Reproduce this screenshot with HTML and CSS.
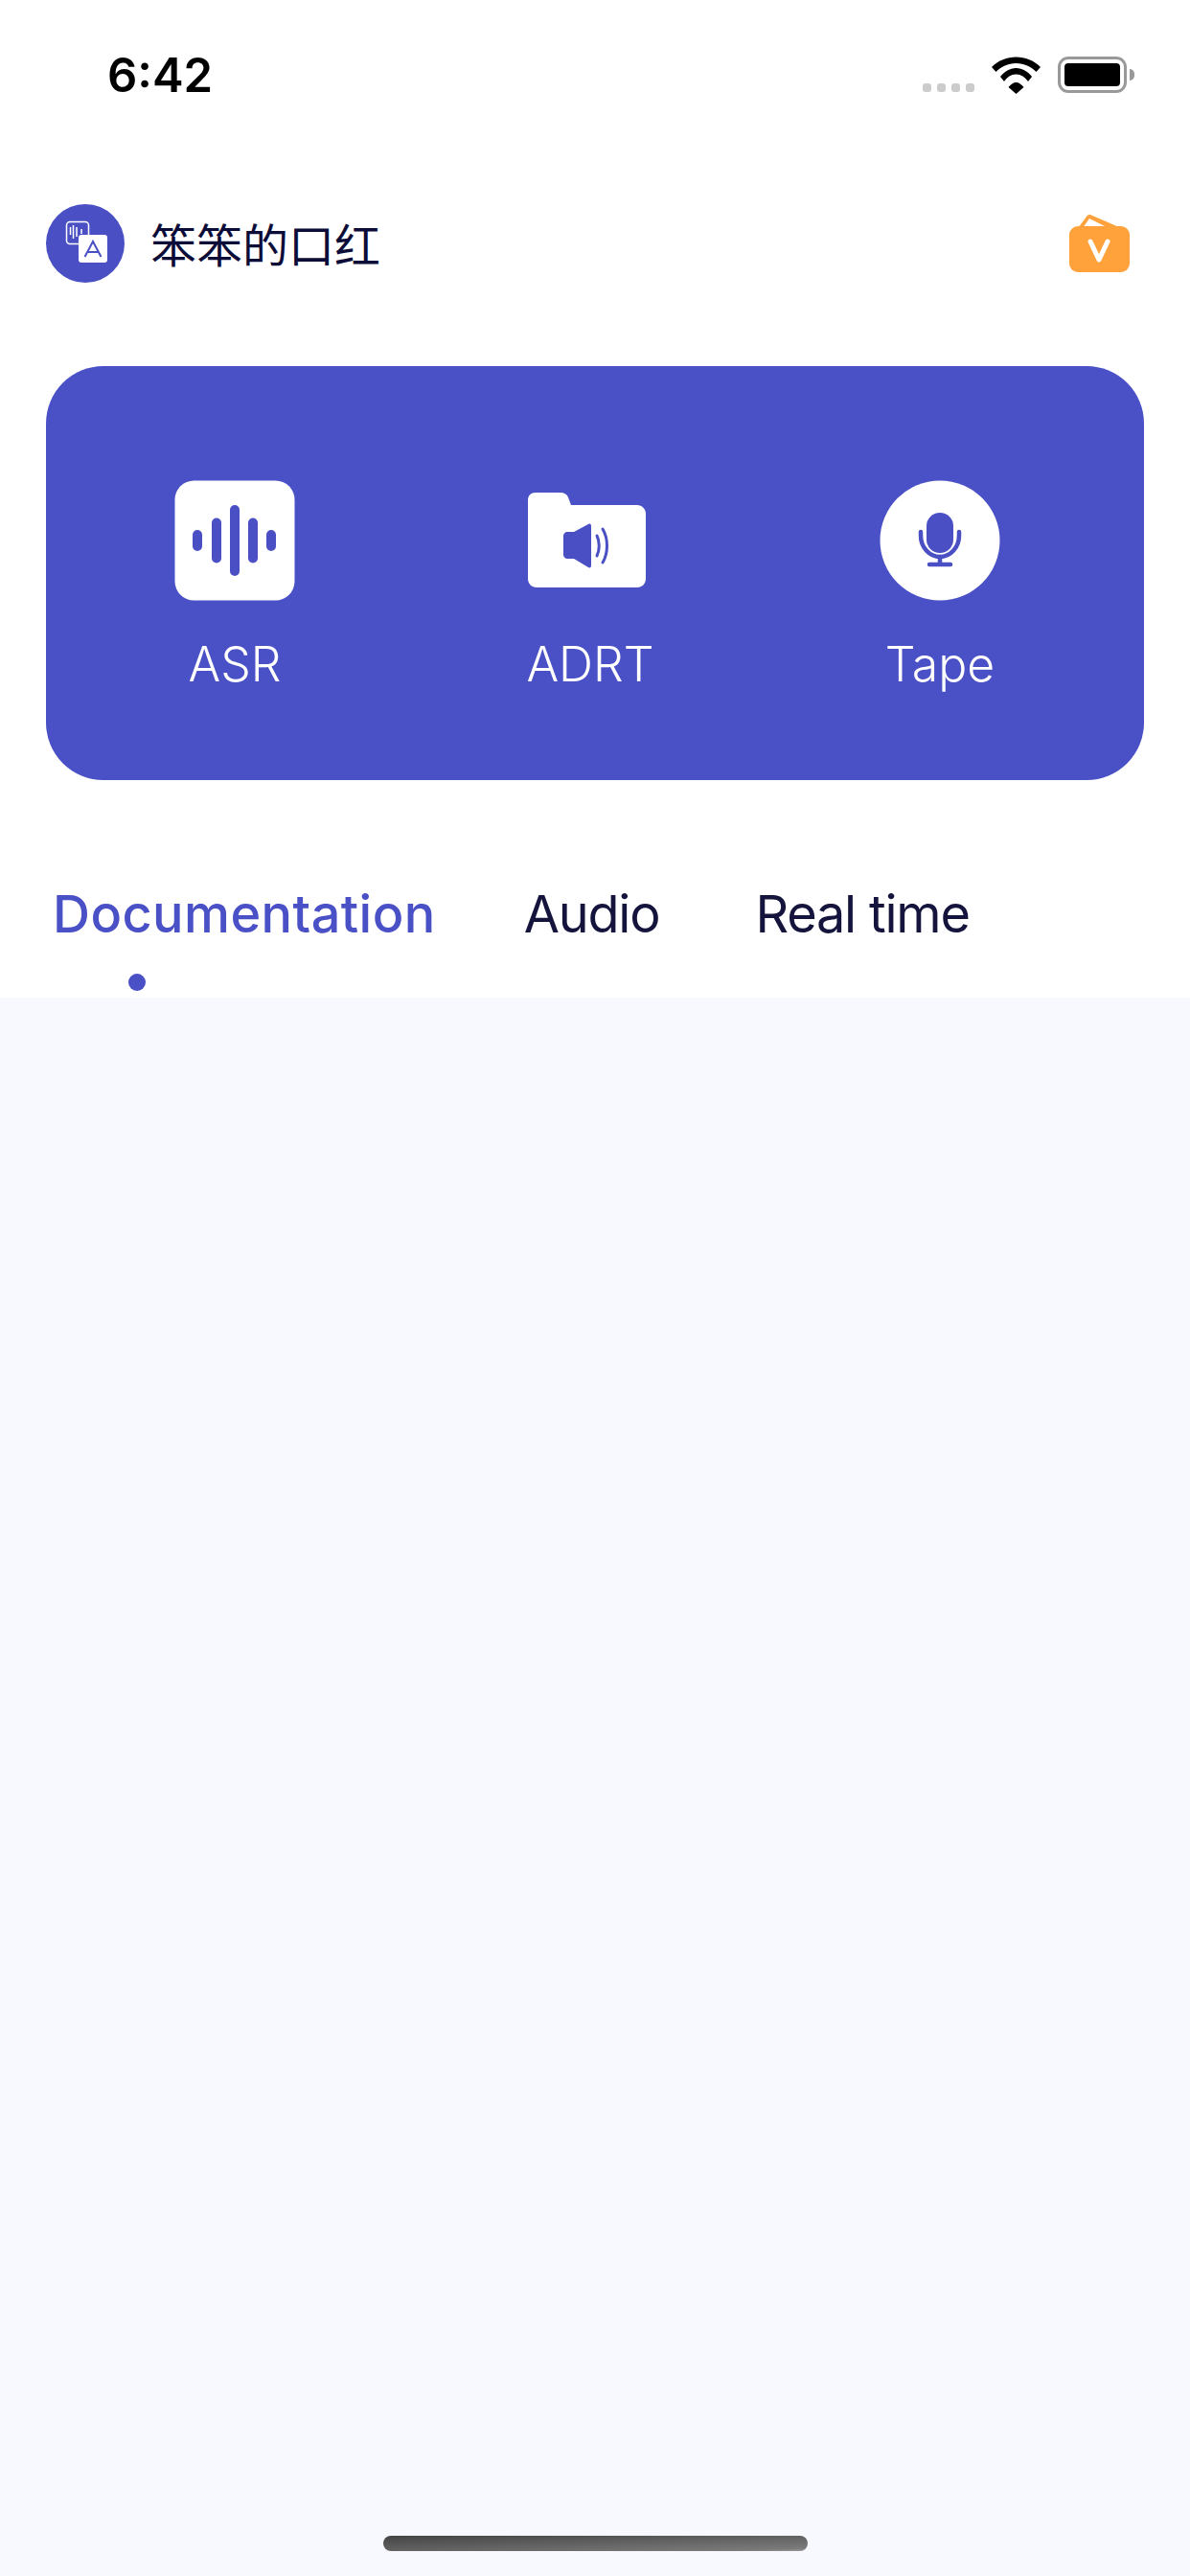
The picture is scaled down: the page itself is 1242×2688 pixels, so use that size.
FILE: index.html
```html
<!DOCTYPE html>
<html lang="en">
<head>
    <meta charset="UTF-8">
    <meta name="viewport" content="width=device-width, initial-scale=1.0">
    <title>Home</title>
    <link rel="stylesheet" href="styles.css">
</head>
<body>
    <div class="top-section">
        <!-- Status bar -->
        <div class="status-bar">
            <span class="time">6:42</span>
            <div class="status-icons">
                <div class="signal-dots">
                    <span class="signal-dot"></span>
                    <span class="signal-dot"></span>
                    <span class="signal-dot"></span>
                    <span class="signal-dot"></span>
                </div>
                <svg class="wifi-icon" width="51" height="40" viewBox="0 0 51 40">
                    <path d="M0 12C7 5 16 1.500 25.500 1.500S44 5 51 12l-4.500 5C41 11.500 34 8 25.500 8S10 11.500 4.500 17z" fill="#000"/>
                    <path d="M9 22C13.500 16.500 19 13 25.500 13S37.500 16.500 42 22l-4 5C35 22.500 30.500 19.500 25.500 19.500S16 22.500 13 27z" fill="#000"/>
                    <path d="M17.500 33C20 30 22.500 28 25.500 28S31 30 33.500 33L25.500 40z" fill="#000"/>
                </svg>
                <div class="battery">
                    <div class="battery-body"><div class="battery-fill"></div></div>
                    <div class="battery-cap"></div>
                </div>
            </div>
        </div>

        <!-- User row -->
        <div class="user-row">
            <div class="avatar">
                <svg width="82" height="82" viewBox="0 0 82 82">
                    <rect x="21.500" y="18.500" width="23" height="23" rx="3.500" fill="none" stroke="#fff" stroke-width="1.500"/>
                    <path d="M25.500 24v8M28.500 22v14M32 24v10M37 26v5" stroke="#fff" stroke-width="1.500"/>
                    <rect x="34" y="32" width="30" height="29" rx="3" fill="#fff"/>
                    <path d="M40.500 55L49 39l8.500 16M44 50h10" fill="none" stroke="#4a50c4" stroke-width="2"/>
                </svg>
            </div>
            <span class="user-name">笨笨的口红</span>
            <svg class="vip-icon" width="63" height="60" viewBox="0 0 63 60">
                <path d="M9 14L18 2c1-1.500 3-2.500 5-1.500L52 13z" fill="#ffa23c"/>
                <path d="M15 12.500L21 4l17 8.500z" fill="#fff"/>
                <rect x="0" y="12" width="63" height="48" rx="9" fill="#ffa23c"/>
                <path d="M22 28l9 19 9-19" fill="none" stroke="#fff" stroke-width="5" stroke-linecap="round" stroke-linejoin="round"/>
            </svg>
        </div>

        <!-- Feature card -->
        <div class="feature-card">
            <div class="feature">
                <svg width="126" height="126" viewBox="0 0 126 126">
                    <rect x="0.500" y="0.500" width="125" height="125" rx="20" fill="#fff"/>
                    <g stroke="#4a50c4" stroke-width="10" stroke-linecap="round">
                        <path d="M24 57v12M44 44.500v37M63 31v64M82 44.500v37M101 57v12"/>
                    </g>
                </svg>
                <span class="feature-label">ASR</span>
            </div>
            <div class="feature">
                <svg width="132" height="126" viewBox="0 0 132 126">
                    <path d="M1 21c0-5 3-8 8-8h25c5 0 8 2 9 5l3 8h69c5 0 9 4 9 9v68c0 5-4 9-9 9H10c-5 0-9-4-9-9z" fill="#fff"/>
                    <path d="M42 54h7l15-8c2-1 3 0 3 2v41c0 2-1 3-3 2l-15-9h-7c-2 0-4-2-4-4V58c0-2 2-4 4-4z" fill="#4a50c4"/>
                    <path d="M73 58c3 6 3 15 0 21M79 51c6 10 6 25 0 35" fill="none" stroke="#4a50c4" stroke-width="3" stroke-linecap="round"/>
                </svg>
                <span class="feature-label">ADRT</span>
            </div>
            <div class="feature">
                <svg width="126" height="126" viewBox="0 0 126 126">
                    <circle cx="63" cy="63" r="62.500" fill="#fff"/>
                    <rect x="49" y="34" width="28" height="42" rx="14" fill="#4a50c4"/>
                    <path d="M43 54v4c0 12 9 22 20 22s20-10 20-22v-4" fill="none" stroke="#4a50c4" stroke-width="4.500" stroke-linecap="round"/>
                    <path d="M63 80v8M52 88h22" fill="none" stroke="#4a50c4" stroke-width="4.500" stroke-linecap="round"/>
                </svg>
                <span class="feature-label">Tape</span>
            </div>
        </div>

        <!-- Tabs -->
        <div class="tabs">
            <div class="tab tab-active">
                <span>Documentation</span>
                <span class="tab-dot"></span>
            </div>
            <div class="tab"><span>Audio</span></div>
            <div class="tab tab-last"><span>Real time</span></div>
        </div>
    </div>

    <div class="content">
        <div class="home-bar"></div>
    </div>
</body>
</html>
```

FILE: styles.css
```css
html, body {
    height: 100%;
}
body {
    margin: 0;
    font-family: Inter, "Noto Sans CJK SC", sans-serif;
    background-color: #f8f9ff;
    color: #14143c;
    display: flex;
    flex-direction: column;
}
svg {
    display: block;
}
.top-section {
    background-color: #fff;
    height: 1041px;
    overflow: hidden;
}
.status-bar {
    height: 157px;
    padding: 0 58px 0 112px;
    display: flex;
    justify-content: space-between;
    align-items: flex-start;
}
.time {
    margin-top: 50px;
    font-size: 49px;
    line-height: 58px;
    font-weight: 600;
    color: #000;
}
.status-icons {
    margin-top: 58px;
    display: flex;
    align-items: flex-start;
}
.signal-dots {
    margin-top: 29px;
    margin-right: 18px;
    display: flex;
    gap: 6px;
}
.signal-dot {
    width: 9px;
    height: 9px;
    border-radius: 3px;
    background-color: #ccc;
}
.wifi-icon {
    margin-right: 18px;
}
.battery {
    margin-top: 1px;
    display: flex;
    align-items: center;
    gap: 3px;
}
.battery-body {
    box-sizing: border-box;
    width: 72px;
    height: 38px;
    padding: 4px;
    border: 3px solid #999;
    border-radius: 11px;
}
.battery-fill {
    height: 100%;
    border-radius: 4px;
    background-color: #000;
}
.battery-cap {
    width: 5px;
    height: 12px;
    border-radius: 0 5px 5px 0;
    background-color: #999;
}
.user-row {
    margin: 56px 0 0 48px;
    padding-right: 63px;
    height: 82px;
    display: flex;
    align-items: center;
}
.avatar {
    width: 82px;
    height: 82px;
    border-radius: 50%;
    background-color: #4a50c4;
}
.user-name {
    margin: -2px 0 0 27px;
    font-size: 48px;
    font-weight: 400;
    color: #0c0c38;
}
.vip-icon {
    margin-left: auto;
}
.feature-card {
    margin: 87px 48px 0;
    height: 432px;
    box-sizing: border-box;
    padding-top: 119px;
    border-radius: 60px;
    background-color: #4a50c6;
    display: grid;
    grid-template-columns: 394px 348px 382px;
    align-items: start;
}
.feature {
    display: flex;
    flex-direction: column;
    align-items: center;
    gap: 36px;
}
.feature-label {
    font-size: 50px;
    line-height: 60px;
    font-weight: 300;
    color: #fff;
}
.tabs {
    margin: 104px 0 0 55px;
    display: flex;
    gap: 92px;
}
.tab {
    position: relative;
    font-size: 54px;
    line-height: 72px;
    letter-spacing: -1.2px;
    white-space: nowrap;
}
.tab-last {
    margin-left: 8px;
}
.tab-active {
    color: #4a50c6;
    font-weight: 500;
    letter-spacing: 0.45px;
}
.tab-dot {
    position: absolute;
    left: 79px;
    top: 98px;
    width: 18px;
    height: 18px;
    border-radius: 50%;
    background-color: #4a50c6;
}
.content {
    flex: 1;
    display: flex;
    flex-direction: column;
    justify-content: flex-end;
    align-items: center;
    padding-bottom: 26px;
}
.home-bar {
    width: 443px;
    height: 16px;
    border-radius: 8px;
    background: linear-gradient(178deg, #444, #7a7a7a 90%, #999);
}
```
